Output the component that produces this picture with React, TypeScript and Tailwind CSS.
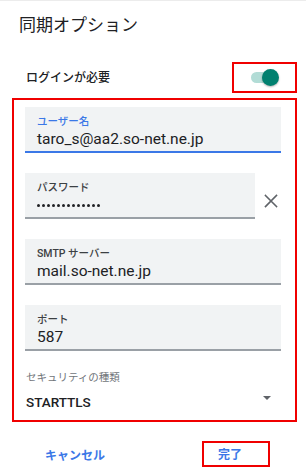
import React from "react";

const font = { fontFamily: 'Roboto, "Noto Sans CJK JP", sans-serif' };

function Field({
  label,
  value,
  active,
  width,
  children,
}: {
  label: string;
  value?: string;
  active?: boolean;
  width: string;
  children?: React.ReactNode;
}) {
  return (
    <div
      className={`${width} h-[46px] bg-[#f1f3f4] pt-[8px] pl-[12px] border-b-2 ${
        active ? "border-[#3b78e7]" : "border-[#9aa0a6]"
      }`}
    >
      <div
        className={`text-[10.5px] leading-[14px] font-medium ${
          active ? "text-[#3b78e7]" : "text-[#3c4043]"
        }`}
      >
        {label}
      </div>
      {children ?? (
        <div className="text-[15.5px] leading-[20px] text-[#202124]">{value}</div>
      )}
    </div>
  );
}

export default function App() {
  return (
    <div
      className="w-[306px] h-[476px] bg-white border-t border-[#ececec] flex flex-col overflow-hidden"
      style={font}
    >
      <div className="mt-[13px] ml-[19px] text-[17px] leading-[22px] text-[#202124]">
        同期オプション
      </div>

      <div className="mt-[26px] flex items-center justify-between pl-[26px] pr-[9px]">
        <div className="text-[12px] leading-[16px] text-[#202124] font-medium">
          ログインが必要
        </div>
        <div className="w-[65px] h-[31px] border-2 border-[#f00000] flex items-center justify-center">
          <div className="relative w-[28px] h-[17px] flex items-center">
            <div className="w-[24px] h-[11px] rounded-full bg-[#b2dcd6]" />
            <div className="absolute right-0 top-0 w-[17px] h-[17px] rounded-full bg-[#00806f] shadow-[0_1px_2px_rgba(0,0,0,0.3)]" />
          </div>
        </div>
      </div>

      <div className="mt-[5px] ml-[12px] w-[285px] h-[324px] border-2 border-[#f00000] pt-[7px] pl-[11px] pr-[14px] flex flex-col">
        <Field label="ユーザー名" value="taro_s@aa2.so-net.ne.jp" active width="w-[256px]" />

        <div className="mt-[20px] flex items-start">
          <Field label="パスワード" width="w-[230px]">
            <div className="h-[20px] flex items-center gap-[2px] pt-[1px]">
              {Array.from({ length: 13 }).map((_, i) => (
                <span key={i} className="w-[3px] h-[3px] rounded-full bg-[#202124]" />
              ))}
            </div>
          </Field>
          <svg
            className="ml-[9px] mt-[21px]"
            width="14"
            height="14"
            viewBox="0 0 14 14"
            fill="none"
            stroke="#5f6368"
            strokeWidth="1.6"
            strokeLinecap="square"
          >
            <path d="M1.5 1.5 L12.5 12.5 M12.5 1.5 L1.5 12.5" />
          </svg>
        </div>

        <div className="mt-[20px]">
          <Field label="SMTP サーバー" value="mail.so-net.ne.jp" width="w-[256px]" />
        </div>

        <div className="mt-[20px]">
          <Field label="ポート" value="587" width="w-[256px]" />
        </div>

        <div className="mt-[20px] pl-[1px] text-[10.5px] leading-[14px] text-[#70757a]">
          セキュリティの種類
        </div>
        <div className="mt-[7px] flex items-start justify-between pl-[1px] pr-[10px]">
          <div className="text-[13.5px] leading-[20px] text-[#202124] font-medium">STARTTLS</div>
          <svg className="mt-[4px]" width="8" height="4" viewBox="0 0 8 4">
            <path d="M0 0 L8 0 L4 4 Z" fill="#5f6368" />
          </svg>
        </div>
      </div>

      <div className="mt-[19px] flex items-center justify-between pl-[45px] pr-[36px]">
        <div className="text-[12px] leading-[16px] font-bold text-[#3b78e7] pt-[3px]">キャンセル</div>
        <div className="w-[68px] h-[26px] border-2 border-[#f00000] flex items-center pl-[14px] pt-[2px]">
          <span className="text-[12px] leading-[16px] font-bold text-[#3b78e7]">完了</span>
        </div>
      </div>
    </div>
  );
}
